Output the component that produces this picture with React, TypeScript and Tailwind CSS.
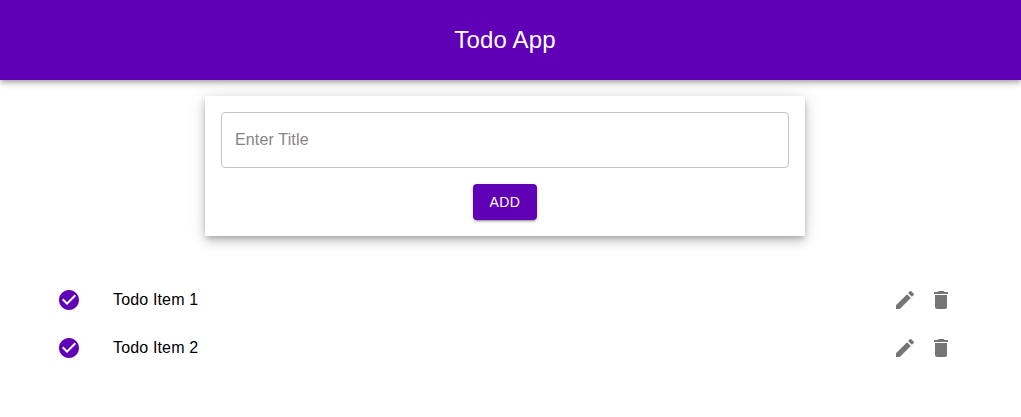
import React from 'react';

const Check = () => (
  <svg viewBox="0 0 24 24" className="w-6 h-6 fill-[#5f00b6]">
    <path d="M12 2C6.48 2 2 6.48 2 12s4.48 10 10 10 10-4.48 10-10S17.52 2 12 2zm-2 15l-5-5 1.41-1.41L10 14.17l7.59-7.59L19 8l-9 9z" />
  </svg>
);

const Edit = () => (
  <svg viewBox="0 0 24 24" className="w-6 h-6 fill-[#757575]">
    <path d="M3 17.25V21h3.75L17.81 9.94l-3.75-3.75L3 17.25zM20.71 7.04c.39-.39.39-1.02 0-1.41l-2.34-2.34a.9959.9959 0 0 0-1.41 0l-1.83 1.83 3.75 3.75 1.83-1.83z" />
  </svg>
);

const Trash = () => (
  <svg viewBox="0 0 24 24" className="w-6 h-6 fill-[#757575]">
    <path d="M6 19c0 1.1.9 2 2 2h8c1.1 0 2-.9 2-2V7H6v12zM19 4h-3.5l-1-1h-5l-1 1H5v2h14V4z" />
  </svg>
);

const TodoRow = ({ title }: { title: string }) => (
  <li className="flex items-center h-12 pl-[57px] pr-[68px]">
    <Check />
    <span className="ml-[32px] text-base tracking-[0.15px] text-black">{title}</span>
    <div className="ml-auto flex gap-3">
      <Edit />
      <Trash />
    </div>
  </li>
);

export default function App() {
  return (
    <div className="min-h-[417px] bg-white font-['Liberation_Sans',Arial,sans-serif]">
      <header className="h-20 pr-[11px] bg-[#5f00b6] flex items-center justify-center shadow-[0_2px_4px_-1px_rgba(0,0,0,0.2),0_4px_5px_0_rgba(0,0,0,0.14),0_1px_10px_0_rgba(0,0,0,0.12)]">
        <h1 className="text-2xl tracking-[0.18px] text-white">Todo App</h1>
      </header>
      <main className="flex flex-col items-center pt-4 pr-[11px]">
        <div className="w-[600px] h-[140px] p-4 bg-white flex flex-col items-center shadow-[0_3px_5px_-1px_rgba(0,0,0,0.2),0_6px_10px_0_rgba(0,0,0,0.14),0_1px_18px_0_rgba(0,0,0,0.12)]">
          <input
            placeholder="Enter Title"
            className="w-full h-14 pl-[13px] pr-3.5 text-base tracking-[0.15px] border border-[#c4c4c4] rounded placeholder:text-[#858585] outline-none"
          />
          <button className="mt-4 w-16 h-9 bg-[#5f00b6] text-white text-sm tracking-[0.4px] rounded shadow-[0_3px_1px_-2px_rgba(0,0,0,0.2),0_2px_2px_0_rgba(0,0,0,0.14),0_1px_5px_0_rgba(0,0,0,0.12)]">
            ADD
          </button>
        </div>
      </main>
      <ul className="mt-10">
        <TodoRow title="Todo Item 1" />
        <TodoRow title="Todo Item 2" />
      </ul>
    </div>
  );
}
